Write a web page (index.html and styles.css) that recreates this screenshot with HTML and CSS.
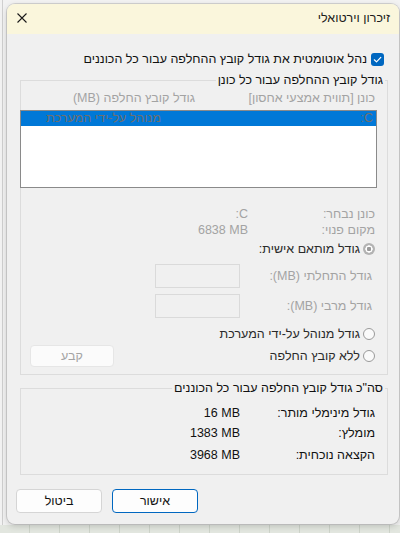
FILE: index.html
```html
<!DOCTYPE html>
<html lang="he">
<head>
<meta charset="utf-8">
<title>זיכרון וירטואלי</title>
<link rel="stylesheet" href="styles.css">
</head>
<body>
<div class="dialog" dir="rtl">
  <div class="titlebar">
    <span class="title">זיכרון וירטואלי</span>
    <span class="close"><svg width="10" height="10" viewBox="0 0 10 10"><path d="M0.5 0.5 L9.5 9.5 M9.5 0.5 L0.5 9.5" stroke="#1a1a1a" stroke-width="1.1" fill="none"/></svg></span>
  </div>
  <div class="content">
    <div class="autorow">
      <span class="check"><svg width="13" height="13" viewBox="0 0 13 13"><path d="M3.3 6.8 L5.5 8.9 L9.8 4.4" stroke="#fff" stroke-width="1.2" fill="none" stroke-linecap="round" stroke-linejoin="round"/></svg></span>
      <span class="autolabel">נהל אוטומטית את גודל קובץ ההחלפה עבור כל הכוננים</span>
    </div>

    <fieldset class="group g1">
      <legend>גודל קובץ ההחלפה עבור כל כונן</legend>
      <div class="heads">
        <span class="h1">כונן [תווית אמצעי אחסון]</span>
        <span class="h2">גודל קובץ החלפה (MB)</span>
      </div>
      <div class="list">
        <div class="item sel"><span class="c1">C:</span><span class="c2">מנוהל על-ידי המערכת</span></div>
      </div>
      <div class="kv first"><span class="k">כונן נבחר:</span><span class="v">C:</span></div>
      <div class="kv"><span class="k">מקום פנוי:</span><span class="v"><span class="ltr">6838 MB</span></span></div>
      <div class="radio-row r1"><span class="radio on"></span><span class="rlabel">גודל מותאם אישית:</span></div>
      <div class="field-row f1"><span class="fk">גודל התחלתי (MB):</span><span class="box"></span></div>
      <div class="field-row f2"><span class="fk">גודל מרבי (MB):</span><span class="box"></span></div>
      <div class="radio-row r2"><span class="radio"></span><span class="rlabel">גודל מנוהל על-ידי המערכת</span></div>
      <div class="last-row">
        <div class="radio-row"><span class="radio"></span><span class="rlabel">ללא קובץ החלפה</span></div>
        <span class="setbtn">קבע</span>
      </div>
    </fieldset>

    <fieldset class="group g2">
      <legend>סה"כ גודל קובץ החלפה עבור כל הכוננים</legend>
      <div class="tot t1"><span class="tk">גודל מינימלי מותר:</span><span class="tv"><span class="ltr">16 MB</span></span></div>
      <div class="tot t2"><span class="tk">מומלץ:</span><span class="tv"><span class="ltr">1383 MB</span></span></div>
      <div class="tot t3"><span class="tk">הקצאה נוכחית:</span><span class="tv"><span class="ltr">3968 MB</span></span></div>
    </fieldset>

    <div class="buttons">
      <span class="btn primary">אישור</span>
      <span class="btn">ביטול</span>
    </div>
  </div>
</div>
</body>
</html>
```

FILE: styles.css
```css
html, body {
  margin: 0;
  padding: 0;
}
body {
  width: 400px;
  height: 533px;
  overflow: hidden;
  box-sizing: border-box;
  padding: 4px 1px 0 7px;
  font-family: "Liberation Sans", "DejaVu Sans", sans-serif;
  font-size: 12.5px;
  color: #1b1b1b;
  background:
    linear-gradient(to right, transparent 2px, #cfcfcf 2px, #cfcfcf 3px, transparent 3px) 0 0 / 100% 525px no-repeat,
    linear-gradient(#f2f2f2, #f2f2f2) 0 0 / 100% 525px no-repeat,
    repeating-linear-gradient(to right, #e2e6df 0, #e2e6df 29px, #cdd3c9 29px, #cdd3c9 30px),
    #e2e6df;
}
.dialog {
  width: 392px;
  height: 520px;
  box-sizing: border-box;
  background: #f0f0f0;
  border-radius: 8px;
  box-shadow: 0 0 0 1px rgba(0,0,0,0.12), 0 2px 6px rgba(0,0,0,0.18);
  overflow: hidden;
  display: flex;
  flex-direction: column;
}
.titlebar {
  height: 30px;
  flex: none;
  background: #faf6dc;
  display: flex;
  align-items: center;
  justify-content: space-between;
  padding: 0 9px 0 10px;
}
.title {
  color: #1a1a1a;
  margin-top: -2px;
}
.close {
  display: flex;
  margin-top: -2px;
}
.content {
  padding: 0 11px 0 13px;
  display: flex;
  flex-direction: column;
}
.autorow {
  margin-top: 18px;
  height: 14px;
  display: flex;
  align-items: center;
  padding-right: 4px;
  gap: 4px;
}
.check {
  width: 13px;
  height: 13px;
  border-radius: 3px;
  background: #0067c0;
  display: flex;
}
.autolabel {
  color: #111;
}
.group {
  margin: 0;
  padding: 0;
  border: 1px solid #dcdcdc;
  min-width: 0;
}
.group legend {
  padding: 0 2px;
  margin-right: 2px;
  line-height: 14px;
  color: #111;
}
.g1 {
  margin-top: 7px;
  padding-bottom: 7px;
}
.heads {
  margin-top: 4px;
  height: 14px;
  line-height: 14px;
  display: flex;
  padding-right: 12px;
  color: #a3a3a3;
}
.h1 {
  width: 180px;
  flex: none;
}
.list {
  margin: 5px 10px 0 -1px;
  height: 78px;
  box-sizing: border-box;
  border: 1px solid #8a8a8a;
  background: #fff;
  padding-top: 0;
}
.item {
  height: 15px;
  line-height: 15px;
  display: flex;
  padding-right: 3px;
}
.item.sel {
  background: #0078d7;
  color: #6f6f6f;
}
.c1 {
  width: 212px;
  flex: none;
}
.kv {
  height: 14px;
  line-height: 14px;
  display: flex;
  padding-right: 12px;
  color: #a3a3a3;
  margin-top: 2px;
}
.kv.first {
  margin-top: 19px;
}
.k {
  width: 127px;
  flex: none;
}
.ltr {
  direction: ltr;
  unicode-bidi: isolate;
}
.radio-row {
  height: 14px;
  display: flex;
  align-items: center;
  gap: 3px;
  padding-right: 12px;
}
.r1 {
  margin-top: 5px;
}
.r2 {
  margin-top: 9px;
}
.radio {
  width: 12px;
  height: 12px;
  box-sizing: border-box;
  border-radius: 50%;
  border: 1px solid #9a9a9a;
  background: #fafafa;
  flex: none;
}
.radio.on {
  border: none;
  background: radial-gradient(circle, #9b9b9b 0, #9b9b9b 2px, #ffffff 2.5px, #ffffff 3.4px, #b3b3b3 3.9px);
}
.rlabel {
  color: #2a2a2a;
}
.field-row {
  height: 24px;
  display: flex;
  align-items: center;
  padding-right: 15px;
  color: #a3a3a3;
}
.f1 {
  margin-top: 8px;
}
.f2 {
  margin-top: 6px;
}
.fk {
  width: 132px;
  flex: none;
}
.box {
  width: 85px;
  height: 24px;
  box-sizing: border-box;
  border: 1px solid #dadada;
  background: #f0f0f0;
}
.last-row {
  margin-top: 4px;
  height: 22px;
  display: flex;
  align-items: center;
  justify-content: space-between;
  padding-left: 9px;
}
.last-row .radio-row {
  padding-right: 12px;
}
.setbtn {
  width: 84px;
  height: 22px;
  box-sizing: border-box;
  border: 1px solid #e6e6e6;
  border-radius: 4px;
  background: #fbfbfb;
  color: #a3a3a3;
  display: flex;
  align-items: center;
  justify-content: center;
}
.g2 {
  margin-top: 6px;
  padding-bottom: 12px;
}
.tot {
  height: 14px;
  line-height: 14px;
  display: flex;
  padding-right: 12px;
  color: #111;
}
.t1 { margin-top: 11px; }
.t2 { margin-top: 6px; }
.t3 { margin-top: 8px; }
.tk {
  width: 135px;
  flex: none;
}
.buttons {
  margin-top: 14px;
  display: flex;
  justify-content: flex-end;
  gap: 10px;
  padding-left: 0;
  margin-left: -4px;
}
.btn {
  width: 86px;
  height: 24px;
  box-sizing: border-box;
  border: 1px solid #d5d5d5;
  border-radius: 4px;
  background: #fdfdfd;
  display: flex;
  align-items: center;
  justify-content: center;
  color: #111;
}
.btn.primary {
  border-color: #0067c0;
}
```
